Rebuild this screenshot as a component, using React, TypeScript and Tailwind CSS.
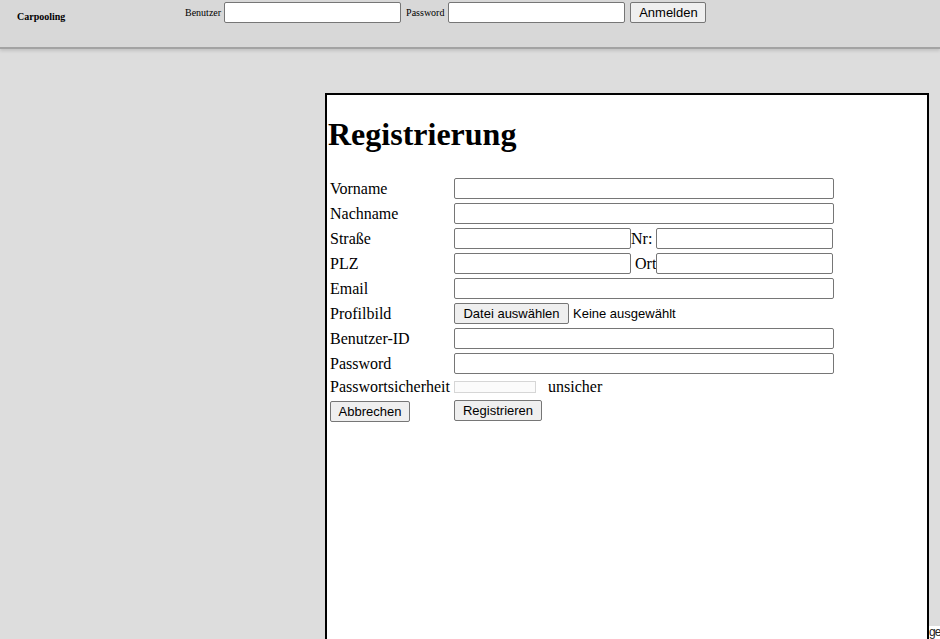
const serif = "font-['Liberation_Serif','Times_New_Roman',serif]";
const sans = "font-['Liberation_Sans',Arial,sans-serif]";

const inputCls = "h-[21px] border border-[#767676] rounded-[2px] bg-white";
const btnCls = `h-[21px] px-[7px] border border-[#767676] rounded-[2px] bg-[#efefef] text-[13px] text-black ${sans} leading-none`;

function Row({ label, children, h = "h-[21px]" }: { label: string; children: React.ReactNode; h?: string }) {
  return (
    <div className={`flex ${h} items-center`}>
      <span className="w-[124px] shrink-0">{label}</span>
      {children}
    </div>
  );
}

export default function App() {
  return (
    <div className={`relative h-[639px] w-[940px] overflow-hidden bg-[#dddddd] ${serif} text-black`}>
      {/* HEADER */}
      <header className="relative h-[49px] bg-[#d8d8d8] border-b-2 border-[#a3a3a3] shadow-[0_2px_3px_rgba(0,0,0,0.12)]">
        <div className="flex items-start">
          <span className="ml-[17px] mt-[9px] w-[168px] text-[10px] font-bold">Carpooling</span>
          <div className="mt-[2px] flex items-center">
            <span className="text-[10px] mr-[3px]">Benutzer</span>
            <input className={`${inputCls} w-[177px]`} />
            <span className="text-[10px] ml-[5px] mr-[4px]">Password</span>
            <input type="password" className={`${inputCls} w-[177px]`} />
            <button className={`${btnCls} ml-[5px] w-[76px] text-[13.5px]`}>Anmelden</button>
          </div>
        </div>
      </header>

      {/* PANEL */}
      <div className="ml-[325px] mt-[44px] w-[604px] h-[600px] border-2 border-black bg-white">
        <h1 className="ml-[1px] mt-[21px] text-[32px] font-bold leading-[37px]">Registrierung</h1>
        <div className="mt-[25px] ml-[3px] flex flex-col gap-[4px] text-[16px]">
          <Row label="Vorname">
            <input className={`${inputCls} w-[380px]`} />
          </Row>
          <Row label="Nachname">
            <input className={`${inputCls} w-[380px]`} />
          </Row>
          <Row label="Straße">
            <input className={`${inputCls} w-[177px]`} />
            <span className="w-[25px]">Nr:</span>
            <input className={`${inputCls} w-[177px]`} />
          </Row>
          <Row label="PLZ">
            <input className={`${inputCls} w-[177px]`} />
            <span className="w-[25px] pl-[4px]">Ort</span>
            <input className={`${inputCls} w-[177px]`} />
          </Row>
          <Row label="Email">
            <input className={`${inputCls} w-[380px]`} />
          </Row>
          <Row label="Profilbild">
            <button className={`${btnCls} w-[115px]`}>Datei auswählen</button>
            <span className={`ml-[4px] text-[13px] ${sans}`}>Keine ausgewählt</span>
          </Row>
          <Row label="Benutzer-ID">
            <input className={`${inputCls} w-[380px]`} />
          </Row>
          <Row label="Password">
            <input type="password" className={`${inputCls} w-[380px]`} />
          </Row>
          <Row label="Passwortsicherheit" h="h-[18px]">
            <div className="h-[12px] w-[82px] border border-[#d6d6d6] bg-[#fbfbfb]" />
            <span className="ml-[12px]">unsicher</span>
          </Row>
          <Row label="">
            <div className="-ml-[124px] w-[124px]">
              <button className={`${btnCls} w-[80px]`}>Abbrechen</button>
            </div>
            <button className={`${btnCls} w-[88px]`}>Registrieren</button>
          </Row>
        </div>
      </div>

      {/* FOOTER */}
      <div className={`absolute left-[929px] top-[626px] w-[11px] h-[20px] bg-white text-[12px] leading-[13px] tracking-[-1px] ${sans} text-[#222]`}>
        ge
      </div>
    </div>
  );
}
